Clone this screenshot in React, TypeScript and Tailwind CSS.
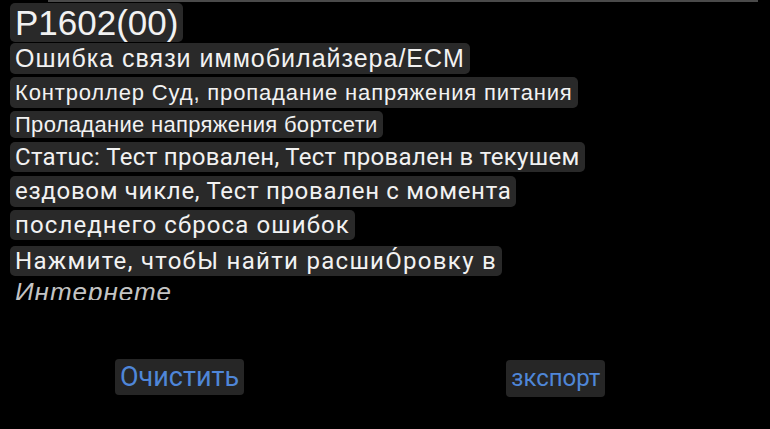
const rows = [
  { text: "P1602(00)", cls: "text-[35px] h-[39px] leading-[39px] mb-[1px]" },
  { text: "Ошибка связи иммобилайзера/ECM", cls: "text-[25px] tracking-[1px] h-[31px] leading-[31px] mb-[3px]" },
  { text: "Контроллер Суд, пропадание напряжения питания", cls: "text-[22px] tracking-[0.85px] h-[31px] leading-[31px] mb-[3px]" },
  { text: "Проладание напряжения бортсети", cls: "text-[22px] tracking-[0.3px] h-[27px] leading-[27px] mb-[4px]" },
  { text: "Cтатuc: Тест провален, Тест провален в текушем", cls: "text-[24px] tracking-[0.3px] h-[30px] leading-[30px] mb-[4px] font-['Roboto']" },
  { text: "ездовом чикле, Тест провален с момента", cls: "text-[24px] tracking-[0.7px] h-[31px] leading-[31px] mb-[3px] font-['Roboto']" },
  { text: "последнего сброса ошибок", cls: "text-[24px] tracking-[1.1px] h-[30px] leading-[30px] mb-[6px] font-['Roboto']" },
  { text: "Нажмите, чтобЫ найти расшиÓровку в", cls: "text-[24px] tracking-[1.3px] h-[30px] leading-[30px] font-['Roboto']" },
];

export default function App() {
  return (
    <div className="w-[770px] h-[429px] bg-black overflow-hidden font-['Liberation_Sans',sans-serif] text-[#f2f2f2]">
      {/* top divider */}
      <div className="ml-[48px] w-[710px] h-[2px] bg-[#4a4a4a]" />

      {/* message list, clipped at the bottom */}
      <div className="h-[298px] overflow-hidden pl-[10px] pt-[1px] flex flex-col items-start">
        {rows.map((r) => (
          <div
            key={r.text}
            className={`bg-[#292929] rounded-[5px] px-[5px] whitespace-nowrap ${r.cls}`}
          >
            {r.text}
          </div>
        ))}
        <div className="pl-[5px] mt-[1px] text-[26px] tracking-[1px] leading-[30px] italic text-[#c4c4c4] whitespace-nowrap">
          Интернете
        </div>
      </div>

      {/* bottom actions */}
      <div className="flex items-start pt-[59px]">
        <button className="ml-[115px] h-[36px] px-[5px] rounded-[4px] bg-[#262626] text-[#4f86d8] text-[27px] leading-[36px] font-['Roboto']">
          Очистить
        </button>
        <button className="ml-[262px] mt-[1px] h-[37px] px-[5px] rounded-[4px] bg-[#262626] text-[#4f86d8] text-[24px] leading-[37px] font-['Roboto']">
          зкспорт
        </button>
      </div>
    </div>
  );
}
